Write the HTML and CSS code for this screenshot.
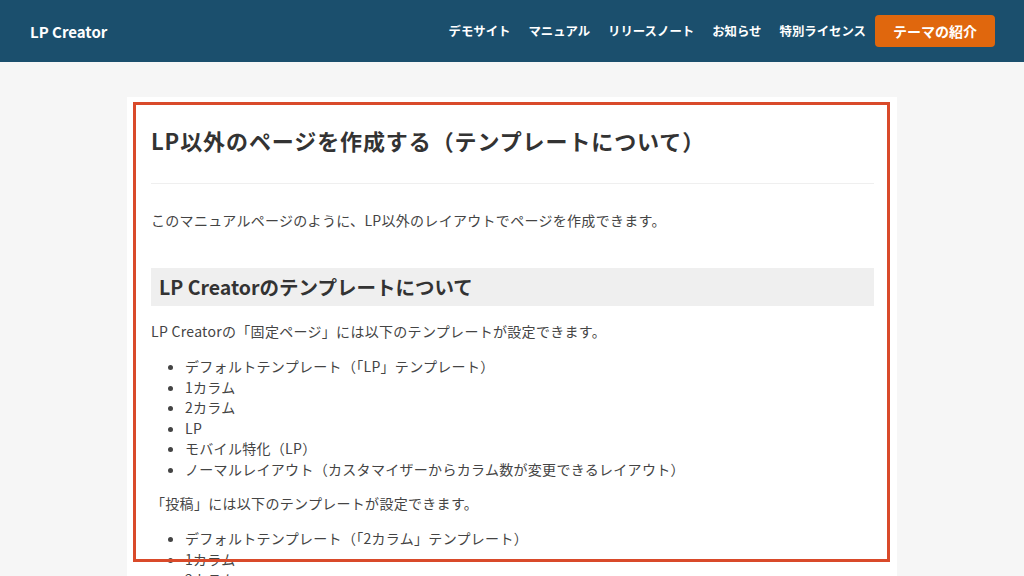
FILE: index.html
```html
<!DOCTYPE html>
<html lang="ja">
  <head>
    <meta charset="UTF-8" />
    <meta name="viewport" content="width=device-width, initial-scale=1.0" />
    <title>LP以外のページを作成する | LP Creator</title>
    <link rel="stylesheet" href="styles.css">
  </head>
  <body>
    <header class="site-header">
      <div class="site-title">LP Creator</div>
      <nav class="global-nav">
        <a href="#">デモサイト</a>
        <a href="#">マニュアル</a>
        <a href="#">リリースノート</a>
        <a href="#">お知らせ</a>
        <a href="#">特別ライセンス</a>
        <a href="#" class="nav-button">テーマの紹介</a>
      </nav>
    </header>

    <main class="page">
      <article class="entry">
        <h1 class="entry-title">LP以外のページを作成する（テンプレートについて）</h1>
        <hr class="entry-divider">
        <div class="entry-body">
          <p class="lead">このマニュアルページのように、LP以外のレイアウトでページを作成できます。</p>

          <h2>LP Creatorのテンプレートについて</h2>
          <p>LP Creatorの「固定ページ」には以下のテンプレートが設定できます。</p>
          <ul>
            <li>デフォルトテンプレート（「LP」テンプレート）</li>
            <li>1カラム</li>
            <li>2カラム</li>
            <li>LP</li>
            <li>モバイル特化（LP）</li>
            <li>ノーマルレイアウト（カスタマイザーからカラム数が変更できるレイアウト）</li>
          </ul>
          <p>「投稿」には以下のテンプレートが設定できます。</p>
          <ul>
            <li>デフォルトテンプレート（「2カラム」テンプレート）</li>
            <li>1カラム</li>
            <li>2カラム</li>
            <li>LP</li>
          </ul>
        </div>
        <div class="highlight-box"></div>
      </article>
    </main>
  </body>
</html>
```

FILE: styles.css
```css
* {
  box-sizing: border-box;
}

:root {
  --header-bg: #1b4f6d;
  --accent: #e0670d;
  --page-bg: #f6f6f6;
  --text: #444444;
  --heading: #333333;
  --marker: #d94a2a;
}

body {
  margin: 0;
  background-color: var(--page-bg);
  color: var(--text);
  font-family: "Noto Sans CJK JP", "Noto Sans", sans-serif;
}

a {
  color: inherit;
  text-decoration: none;
}

.site-header {
  height: 62px;
  background-color: var(--header-bg);
  color: #ffffff;
  display: flex;
  align-items: center;
  justify-content: space-between;
  padding: 0 29px 0 30px;
}

.site-title {
  font-size: 15px;
  font-weight: bold;
}

.global-nav {
  display: flex;
  align-items: center;
  gap: 18px;
  font-size: 12.4px;
  font-weight: bold;
}

.nav-button {
  background-color: var(--accent);
  border-radius: 4px;
  font-size: 14px;
  height: 32px;
  line-height: 32px;
  padding: 0 18px;
  margin-left: -9px;
}

.page {
  padding-top: 35px;
}

.entry {
  position: relative;
  width: 770px;
  margin: 0 auto;
  background-color: #ffffff;
  padding: 27px 23px 40px 24px;
}

.entry-title {
  margin: 0;
  font-size: 22px;
  line-height: 33px;
  letter-spacing: 0.9px;
  color: var(--heading);
}

.entry-divider {
  border: none;
  border-top: 1px solid #efefef;
  margin: 26px 0 0;
}

.entry-body {
  font-size: 14px;
  letter-spacing: 0.3px;
}

.entry-body p {
  margin: 13px 0 0;
  line-height: 24px;
}

.entry-body .lead {
  margin-top: 24px;
}

.entry-body h2 {
  margin: 36px 0 0;
  background-color: #efefef;
  color: var(--heading);
  font-size: 19.5px;
  line-height: 38px;
  letter-spacing: 0;
  padding: 0 8px;
}

.entry-body ul {
  margin: 13px 0 0;
  padding-left: 34px;
  line-height: 20.5px;
}

.entry-body ul + p {
  margin-top: 12px;
}

.highlight-box {
  position: absolute;
  left: 6px;
  top: 5px;
  width: 757px;
  height: 460px;
  border: 3px solid var(--marker);
}
```
